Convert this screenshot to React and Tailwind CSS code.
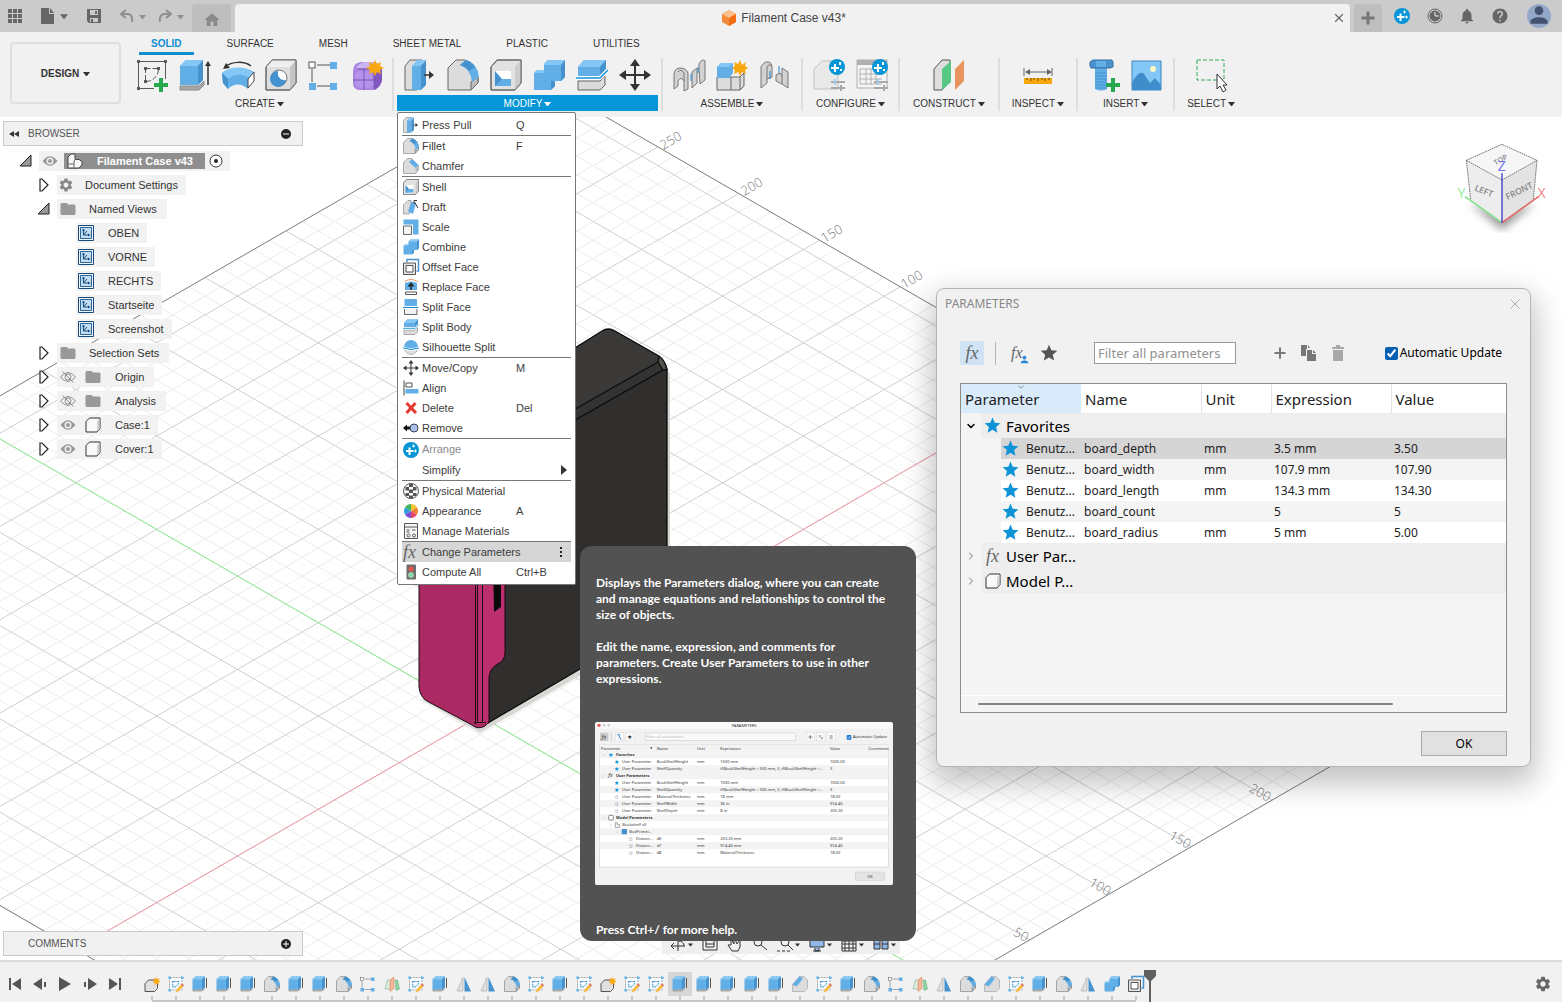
import React, { Component } from "react";
import { MdHelp, MdNotifications, MdStar, MdSettings, MdFolder, MdHome, MdPerson } from "react-icons/md";
import { X, Plus, ChevronDown, ChevronRight } from "lucide-react";

const BLUE = "#62aee6";
const LIGHT = "#84c6f5";
const DARK = "#4592cf";
const LINE = "#666666";

// All tool icons share a 32 x 32 view box
const ICONS = {
  sketch: (
    <>
      <g fill="none" stroke="#5a5a5a">
        <path d="M2.500 2.500H29.500V20M2.500 2.500V29.500H18" />
        <path d="M9.500 9.500H22.500C22.500 17 17 22.500 9.500 22.500Z" strokeDasharray="5 2" />
      </g>
      <path d="M1 1h3v3H1zM28 1h3v3h-3zM1 28h3v3H1zM8 8h3v3H8zM21 8h3v3h-3zM8 21h3v3H8z" fill="#5a5a5a" />
      <path d="M23 19h4v5h5v4h-5v5h-4v-5h-5v-4h5z" fill="#25a850" />
    </>
  ),
  sketchEdit: (
    <>
      <path d="M3 3H28V28H3Z" fill="#f6fbff" stroke="#a9a9a9" strokeWidth="2" strokeDasharray="4 2" />
      <path d="M9 11H22C22 17 17 22 10 23Z" fill="none" stroke="#4592cf" strokeWidth="2" strokeDasharray="6 2" />
      <path d="M1 1h5v5H1zM26 1h5v5h-5zM1 26h5v5H1z" fill="#62aee6" />
      <path d="M17 27L26 17L30 21L21 31L16 32Z" fill="#f5b73d" />
      <path d="M26 17L28 15L32 19L30 21Z" fill="#e8554e" />
    </>
  ),
  extrude: (
    <>
      <path d="M1 27L20 27L25 22V26L20 31H1Z" fill="#a8a8a8" stroke="#8a8a8a" />
      <path d="M1 7L7 1H24V21L19 26H1Z" fill={BLUE} />
      <path d="M1 7L7 1H24L19 7Z" fill={LIGHT} />
      <path d="M19 7L24 1V21L19 26Z" fill={DARK} />
      <path d="M29 26V5" stroke="#333" strokeWidth="1.500" />
      <path d="M26 7L29 2L32 7Z" fill="#333" />
    </>
  ),
  extrudeSmall: (
    <>
      <path d="M1 26H20L26 21V26L20 31H1Z" fill="#a8a8a8" />
      <path d="M1 7L7 1H26V21L20 27H1Z" fill={BLUE} />
      <path d="M1 7L7 1H26L20 7Z" fill={LIGHT} />
      <path d="M20 7L26 1V21L20 27Z" fill={DARK} />
      <path d="M29 24V4" stroke="#555" strokeWidth="2" />
    </>
  ),
  revolve: (
    <>
      <path d="M3 8C10 2 22 2 29 7" fill="none" stroke="#333" strokeWidth="1.500" />
      <path d="M1 10L4 4L8 9Z" fill="#333" />
      <path d="M0 14C9 8 22 8 32 13L26 30C20 24 12 24 6 30L1 24Z" fill={BLUE} />
      <path d="M0 14C9 7 22 7 32 13L27 19C19 14 12 15 6 20Z" fill={LIGHT} />
      <path d="M0 14L6 20V30L1 24Z" fill={DARK} />
      <path d="M26 20L32 13V22L26 29Z" fill="#fff" stroke="#444" />
    </>
  ),
  hole: (
    <>
      <path d="M1 8L7 1H31V24L25 31H1Z" fill="#dedede" stroke={LINE} />
      <path d="M1 8L7 1H31L25 8Z" fill="#efefef" />
      <path d="M25 8L31 1V24L25 31Z" fill="#c4c4c4" />
      <path d="M1 8L7 1H31V24L25 31H1Z" fill="none" stroke={LINE} />
      <circle cx="14" cy="19" r="8" fill="#fff" stroke="#777" />
      <path d="M13 12A8 8 0 1 0 21 21C16 22 12 18 13 12Z" fill={DARK} />
    </>
  ),
  pattern: (
    <>
      <path d="M9 6H24M4 10V23M9 27H24" stroke="#555" />
      <rect x="1" y="3" width="6" height="6" fill="#fff" stroke="#555" />
      <path d="M22 3h7v7h-7zM1 24h7v7H1zM22 24h7v7h-7z" fill={BLUE} />
    </>
  ),
  form: (
    <>
      <path d="M2 12Q2 4 10 3H22Q30 5 31 12V21Q30 28 24 31H8Q2 30 2 24Z" fill="#a982e2" />
      <path d="M5 8Q10 3 15 3H24L21 9H7Z" fill="#cdb2f4" />
      <path d="M22 12L31 9V21Q30 27 23 31Z" fill="#8358c2" />
      <rect x="4" y="12" width="18" height="17" rx="5" fill="#b592ea" />
      <path d="M2 21H23L31 17M13 10V31M7 10H22M24 11V30" stroke="#7b55b8" fill="none" />
      <path d="M24 1L26 5L30 3L29 7L33 9L29 11L30 15L26 13L24 17L22 13L18 15L19 11L15 9L19 7L18 3L22 5Z" fill="#f7a80f" />
    </>
  ),
  pressPull: (
    <>
      <path d="M1 7L6 1H18V26L13 31H1Z" fill="#dcdcdc" stroke={LINE} />
      <path d="M8 7L13 1H22L17 7Z" fill={LIGHT} />
      <path d="M8 7H17V31H8Z" fill={BLUE} />
      <path d="M17 7L22 1V26L17 31Z" fill={DARK} />
      <path d="M20 16H26" stroke="#333" strokeWidth="1.500" />
      <path d="M25 12L30 16L25 20Z" fill="#333" />
    </>
  ),
  fillet: (
    <>
      <path d="M1 9L9 1H18Q30 4 31 20V23L24 31H1Z" fill="#dcdcdc" stroke={LINE} />
      <path d="M24 23L31 18V24L24 31Z" fill="#bdbdbd" stroke={LINE} />
      <path d="M13 6L19 1Q31 5 32 18L25 23Q24 10 13 6Z" fill={BLUE} />
      <path d="M13 6L19 1Q25 3 28 8L22 12Q19 8 13 6Z" fill={DARK} />
    </>
  ),
  chamfer: (
    <>
      <path d="M1 9L9 1H17L31 15V24L25 31H1Z" fill="#dcdcdc" stroke={LINE} />
      <path d="M12 8L18 2L31 14L25 20Z" fill={BLUE} />
      <path d="M25 20L31 14V24L25 31Z" fill="#bdbdbd" />
    </>
  ),
  chamferLeft: (
    <>
      <path d="M1 17L15 1H24L31 8V24L25 31H1Z" fill="#dcdcdc" stroke="#8a8a8a" />
      <path d="M1 17L15 1L22 5L9 21Z" fill={BLUE} />
    </>
  ),
  shell: (
    <>
      <path d="M1 8L7 1H31V24L25 31H1Z" fill="#e2e2e2" stroke={LINE} />
      <path d="M25 8L31 1V24L25 31Z" fill="#cdcdcd" />
      <path d="M1 8L7 1H31V24L25 31H1Z" fill="none" stroke={LINE} />
      <rect x="5" y="12" width="16" height="15" fill="#fff" />
      <path d="M5 12L12 20V27H5Z" fill={DARK} />
      <path d="M5 27L12 20H21V27Z" fill={BLUE} />
    </>
  ),
  combine: (
    <>
      <path d="M1 14L4 11H11V5L15 1H32V18L28 22H22V27L18 31H1Z" fill={BLUE} />
      <path d="M11 5L15 1H32L28 6H11ZM1 14L4 11H11V14Z" fill={LIGHT} />
      <path d="M28 6L32 1V18L28 22ZM18 22H22V27L18 31Z" fill={DARK} />
    </>
  ),
  split: (
    <>
      <path d="M2 8L8 1H30V11L24 17H2Z" fill={BLUE} />
      <path d="M2 8L8 1H30L24 8Z" fill={LIGHT} />
      <path d="M24 8L30 1V11L24 17Z" fill={DARK} />
      <path d="M2 22H24L29 17V26L24 31H2Z" fill="#dadada" stroke={LINE} />
      <path d="M0 19H24L32 11" fill="none" stroke="#fff" strokeWidth="4" />
      <path d="M0 19H24L32 11" fill="none" stroke="#1493d8" strokeWidth="1.500" />
    </>
  ),
  move: (
    <>
      <path d="M16 5V27M5 16H27" stroke="#333" strokeWidth="2" />
      <path d="M16 0L21 7H11ZM16 32L21 25H11ZM0 16L7 11V21ZM32 16L25 11V21Z" fill="#333" />
    </>
  ),
  newComponent: (
    <>
      <path d="M1 18H24L28 14V27L24 31H1Z" fill="#dcdcdc" stroke={LINE} />
      <path d="M15 18V31M24 18V31" stroke={LINE} />
      <path d="M1 8L5 4H17V14L13 19H1Z" fill={BLUE} />
      <path d="M1 8L5 4H17L13 8Z" fill={LIGHT} />
      <path d="M24 1L26 6L30 3L29 7L32 9L29 11L30 15L26 13L24 17L22 13L18 15L19 11L16 9L19 7L18 3L22 5Z" fill="#f7a80f" />
    </>
  ),
  component: (
    <>
      <path d="M2 15L9 8H27V25L21 31H2Z" fill="#e0e0e0" stroke="#555" strokeWidth="2" />
      <path d="M24 1L26 6L31 4L29 9L33 11L29 13L30 18L25 15L21 18L21 13L17 11L21 8L19 4L23 6Z" fill="#f7a80f" />
    </>
  ),
  joint: (
    <g fill="#d2d2d2" stroke="#777">
      <path d="M26 10V5Q29 -1 32 2V21L27 25Z" />
      <path d="M19 13L24 9V24L19 29Z" />
      <path d="M1 30V15Q2 9 7 9Q13 9 15 14V30L11 32V22Q8 17 5 22V27Z" />
      <path d="M5 13Q8 9 11 14V22" fill="none" />
      <path d="M18 15V22M25 8V14" stroke="#1686d6" />
    </g>
  ),
  asBuilt: (
    <g fill="#d2d2d2" stroke="#777">
      <path d="M2 29V8Q5 2 10 3Q13 4 13 8V18L8 20V24Z" />
      <path d="M8 20V8Q9 5 13 6" fill="none" />
      <path d="M17 16L21 14L23 17V9L29 13V29L23 25L17 22Z" />
      <path d="M23 17V25" fill="none" />
      <path d="M11 12V20M20 7V14" stroke="#1686d6" />
    </g>
  ),
  configure: (
    <>
      <path d="M1 10L9 2H25V30H1Z" fill="#e9e9e9" stroke="#c2c2c2" />
      <circle cx="24" cy="8" r="8" fill="#0696d7" />
      <path d="M22 5V13M18 9H26M27 3V6M28 10V12" stroke="#fff" strokeWidth="2" />
      <path d="M18 23H32M18 29H32M22 20V26M28 26V32" stroke="#a9a9a9" strokeWidth="2" />
      <path d="M22 20V26" stroke="#9fd0ee" strokeWidth="2" />
    </>
  ),
  configTable: (
    <>
      <path d="M1 1H31V29H1Z" fill="#f5f5f5" stroke="#b0b0b0" />
      <path d="M1 1H31V6H1Z" fill="#b0b0b0" />
      <path d="M4 10H26M4 15H26M4 20H26M4 25H26M4 10V25M10 10V25M15 10V25M20 10V25" stroke="#b0b0b0" />
      <circle cx="24" cy="8" r="8" fill="#0696d7" />
      <path d="M22 5V13M18 9H26M27 3V6M28 10V12" stroke="#fff" strokeWidth="2" />
      <path d="M18 23H32M18 29H32M28 26V32" stroke="#a9a9a9" strokeWidth="2" />
      <path d="M22 20V26" stroke="#9fd0ee" strokeWidth="2" />
    </>
  ),
  construct: (
    <>
      <path d="M1 10L9 1H17V22L9 31H1Z" fill="#dedede" stroke="#555" />
      <path d="M9 10L18 2V23L9 31Z" fill="#58c784" />
      <path d="M22 10L31 1V22L22 31Z" fill="#e9945f" />
    </>
  ),
  inspect: (
    <>
      <path d="M2 9V17M30 9V17M5 13H28" stroke="#666" fill="none" />
      <path d="M3 13L8 10V16ZM30 13L25 10V16Z" fill="#666" />
      <path d="M2 19H30V25H2Z" fill="#f7a80f" />
      <path d="M5 19V21M9 19V22M12 19V21M16 19V22M20 19V21M23 19V22M27 19V21" stroke="#6b5010" />
    </>
  ),
  insertBolt: (
    <>
      <path d="M7 9H19V30Q13 33 7 30Z" fill={BLUE} />
      <path d="M7 14H19M7 17H19M7 20H19M7 23H19M7 26H19M7 29H19" stroke={DARK} />
      <path d="M2 3L5 1H24L25 3V8L22 9H3L2 7Z" fill="#4a93cf" stroke="#35719f" />
      <path d="M8 2H18V8H8Z" fill={BLUE} />
      <path d="M23 19h4v5h5v4h-5v5h-4v-5h-5v-4h5z" fill="#25a850" />
    </>
  ),
  insertImage: (
    <>
      <path d="M1 2H30V31H1Z" fill={LIGHT} stroke="#3d87c0" />
      <path d="M1 24Q8 10 13 15L19 24L24 19L30 26V31H1Z" fill="#3f8dca" />
      <circle cx="22" cy="10" r="3" fill="#fdf7c8" />
    </>
  ),
  select: (
    <>
      <path d="M2 1H29V21H2Z" fill="none" stroke="#2fab59" strokeDasharray="4 2" />
      <path d="M22 15V30L25 27L28 33L31 31L28 26H32Z" fill="#fff" stroke="#333" />
    </>
  ),
  draft: (
    <>
      <path d="M1 12L10 3H16L14 28L12 30H1Z" fill="#dcdcdc" stroke={LINE} />
      <path d="M10 25L17 5L26 9L20 30Z" fill={BLUE} />
      <path d="M23 6L30 18M22 9V3H28" stroke="#333" strokeWidth="2" fill="none" />
    </>
  ),
  scale: (
    <>
      <path d="M1 1H31V31H20V11H1Z" fill={BLUE} />
      <path d="M1 14H17V31H1Z" fill="#f5f5f5" stroke={LINE} strokeWidth="2" />
    </>
  ),
  offset: (
    <>
      <path d="M8 6V1H31V24H27" fill="none" stroke={DARK} strokeWidth="3" />
      <path d="M1 8H25V31H1Z" fill="#e6e6e6" stroke="#555" strokeWidth="2" />
      <path d="M6 13H20V26H6Z" fill="#fff" stroke="#555" strokeWidth="2" />
    </>
  ),
  replaceFace: (
    <>
      <path d="M3 5Q16 -3 29 5" fill="none" stroke="#e9945f" strokeWidth="2" />
      <path d="M4 8Q16 2 28 8V22H4Z" fill={BLUE} />
      <path d="M16 22V12M11 15L16 9L21 15" fill="none" stroke="#222" strokeWidth="3" />
      <path d="M5 26H27V31H5Z" fill="#fff" stroke="#555" strokeWidth="2" />
    </>
  ),
  splitFace: (
    <>
      <path d="M3 0H28V14H3Z" fill={BLUE} />
      <path d="M3 20V31H28V20" fill="#f2f2f2" stroke="#666" strokeWidth="2" />
      <path d="M0 17H31" stroke="#1686d6" strokeWidth="2" />
    </>
  ),
  silhouette: (
    <>
      <circle cx="16" cy="16" r="14" fill={BLUE} />
      <path d="M3 21H29Q25 31 16 31Q7 31 3 21Z" fill="#dedede" stroke="#888" />
      <path d="M0 18Q16 24 32 18" stroke="#fff" strokeWidth="5" fill="none" />
      <path d="M0 18Q16 24 32 18" stroke="#1686d6" strokeWidth="2" fill="none" />
    </>
  ),
  align: (
    <>
      <path d="M2 1V31" stroke="#444" strokeWidth="2" />
      <path d="M6 6H18V14H6Z" fill="#fff" stroke="#555" strokeWidth="2" />
      <path d="M5 18H31V27H5Z" fill={BLUE} />
    </>
  ),
  remove: (
    <>
      <path d="M0 16L8 9V13H14V19H8V23Z" fill="#111" />
      <circle cx="22" cy="16" r="8" fill="#a9c3ec" stroke="#445" strokeWidth="2" />
    </>
  ),
  delete: <path d="M7 6L26 26M25 6L7 26" stroke="#e8392f" strokeWidth="6" />,
  arrange: (
    <>
      <circle cx="16" cy="16" r="16" fill="#0696d7" />
      <path d="M13 11V26M6 18H21" stroke="#fff" strokeWidth="4" />
      <path d="M21 5V11M18 8H24M25 15V21M22 18H28" stroke="#fff" strokeWidth="2" />
    </>
  ),
  physical: (
    <>
      <circle cx="16" cy="16" r="15" fill="#fff" stroke="#555" strokeWidth="2" />
      <path d="M12 2h8v6h-8zM5 8h7v7H5zM20 8h7v7h-7zM12 13h8v7h-8zM5 20h7v6H5zM20 20h7v6h-7zM12 25h8v6h-8z" fill="#555" />
    </>
  ),
  appearance: (
    <>
      <path d="M16 16V2A14 14 0 0 1 28 9Z" fill="#f6c22e" />
      <path d="M16 16L28 9A14 14 0 0 1 28 23Z" fill="#ef8232" />
      <path d="M16 16L28 23A14 14 0 0 1 16 30Z" fill="#e64a6b" />
      <path d="M16 16V30A14 14 0 0 1 4 23Z" fill="#7a4fd6" />
      <path d="M16 16L4 23A14 14 0 0 1 4 9Z" fill="#2f9de0" />
      <path d="M16 16L4 9A14 14 0 0 1 16 2Z" fill="#3fb45e" />
    </>
  ),
  materials: (
    <>
      <path d="M3 1H29V31H3Z" fill="#f7f7f7" stroke="#555" strokeWidth="2" />
      <path d="M3 8H29M7 14H13M18 14H25M7 18H13" stroke="#555" strokeWidth="2" />
      <circle cx="11" cy="25" r="3" fill="none" stroke="#555" strokeWidth="2" />
      <circle cx="22" cy="25" r="3" fill="none" stroke="#555" strokeWidth="2" />
    </>
  ),
  compute: (
    <>
      <rect x="7" y="1" width="19" height="30" rx="2" fill="#6e6e6e" />
      <circle cx="16" cy="10" r="5" fill="#e8554e" />
      <circle cx="16" cy="22" r="5" fill="#7bd69b" stroke="#e7ffe9" />
    </>
  ),
  mirror: (
    <>
      <path d="M14 3V30H2Z" fill="#dedede" stroke="#999" />
      <path d="M17 2V31H30Z" fill={DARK} />
    </>
  ),
  plane: (
    <>
      <path d="M2 26L7 8H13V26Z" fill="#d9ecdd" stroke="#7c9c84" />
      <path d="M12 8L20 2V25L12 31Z" fill="#f1b69a" stroke="#d77c50" />
      <path d="M22 8H27L31 26L24 29Z" fill="#8fd3a4" stroke="#5aa873" />
    </>
  ),
  box: (
    <>
      <path d="M2 9L9 2H30V23L24 30H2Z" fill="#fafafa" stroke="#333" strokeWidth="2" strokeLinejoin="round" />
      <path d="M24 9L29 3V22L24 29Z" fill="#d2d2d2" />
    </>
  ),
  assembly: (
    <>
      <path d="M2 8L8 2H16V13H24L30 17V24L24 30H2Z" fill="#f7f7f7" stroke="#444" strokeWidth="2" strokeLinejoin="round" />
      <path d="M14 30V16L17 13M3 22H14" stroke="#666" fill="none" strokeWidth="2" />
    </>
  ),
  namedView: (
    <>
      <path d="M1 1H31V31H1Z" fill="#eef6fc" stroke="#164a7b" strokeWidth="2" />
      <path d="M5 5H27V27H5Z" fill="#c3def2" stroke="#2b6699" strokeWidth="2" />
      <path d="M11 10V20H22M11 20L18 12" fill="none" stroke="#164a7b" strokeWidth="2" />
      <path d="M8 12L11 7L14 12ZM20 17L25 20L20 23Z" fill="#164a7b" />
    </>
  ),
  eye: (
    <>
      <path d="M1 16Q16 -3 31 16Q16 35 1 16Z" fill="#9a9a9a" />
      <circle cx="16" cy="16" r="7" fill="#eee" />
      <circle cx="16" cy="16" r="4" fill="#9a9a9a" />
    </>
  ),
  eyeOff: (
    <g fill="none" stroke="#8f8f8f" strokeWidth="2">
      <path d="M1 16Q16 -2 31 16Q16 34 1 16Z" />
      <circle cx="16" cy="16" r="6" />
      <path d="M5 5L27 27" />
    </g>
  ),
};

const Icon = ({ name, className = "size-4" }) => (
  <svg viewBox="0 0 32 32" className={`shrink-0 overflow-visible ${className}`} aria-hidden="true">
    {ICONS[name]}
  </svg>
);

const Caret = ({ className = "size-[7px]" }) => (
  <svg viewBox="0 0 7 7" className={`shrink-0 ${className}`} fill="currentColor" aria-hidden="true">
    <path d="M0 2H7L4 6H3Z" />
  </svg>
);

const Fx = ({ className = "text-lg" }) => (
  <span className={`font-['Liberation_Serif',serif] italic leading-none text-[#666] ${className}`}>fx</span>
);

const TABS = ["SOLID", "SURFACE", "MESH", "SHEET METAL", "PLASTIC", "UTILITIES"];

const GROUPS = [
  { label: "CREATE", pad: "px-[9px]", icons: ["sketch", "extrude", "revolve", "hole", "pattern", "form"] },
  { label: "MODIFY", pad: "px-[3px]", active: true, icons: ["pressPull", "fillet", "shell", "combine", "split", "move"] },
  { label: "ASSEMBLE", pad: "px-[10px]", icons: ["joint", "newComponent", "asBuilt"] },
  { label: "CONFIGURE", pad: "px-[10px]", icons: ["configure", "configTable"] },
  { label: "CONSTRUCT", pad: "px-[13px]", icons: ["construct"] },
  { label: "INSPECT", pad: "px-[12px]", icons: ["inspect"] },
  { label: "INSERT", pad: "px-[10px]", icons: ["insertBolt", "insertImage"] },
  { label: "SELECT", pad: "px-[12px]", icons: ["select"] },
];

const MENU = [
  [{ label: "Press Pull", icon: "pressPull", keys: "Q" }],
  [
    { label: "Fillet", icon: "fillet", keys: "F" },
    { label: "Chamfer", icon: "chamfer" },
  ],
  [
    { label: "Shell", icon: "shell" },
    { label: "Draft", icon: "draft" },
    { label: "Scale", icon: "scale" },
    { label: "Combine", icon: "combine" },
    { label: "Offset Face", icon: "offset" },
    { label: "Replace Face", icon: "replaceFace" },
    { label: "Split Face", icon: "splitFace" },
    { label: "Split Body", icon: "split" },
    { label: "Silhouette Split", icon: "silhouette" },
  ],
  [
    { label: "Move/Copy", icon: "move", keys: "M" },
    { label: "Align", icon: "align" },
    { label: "Delete", icon: "delete", keys: "Del" },
    { label: "Remove", icon: "remove" },
  ],
  [
    { label: "Arrange", icon: "arrange", disabled: true },
    { label: "Simplify", submenu: true },
  ],
  [
    { label: "Physical Material", icon: "physical" },
    { label: "Appearance", icon: "appearance", keys: "A" },
    { label: "Manage Materials", icon: "materials" },
  ],
  [
    { label: "Change Parameters", fx: true, active: true },
    { label: "Compute All", icon: "compute", keys: "Ctrl+B" },
  ],
];

const VIEWS = ["OBEN", "VORNE", "RECHTS", "Startseite", "Screenshot"];

const PARAMETERS = [
  { name: "board_depth", unit: "mm", expression: "3.5 mm", value: "3.50" },
  { name: "board_width", unit: "mm", expression: "107.9 mm", value: "107.90" },
  { name: "board_length", unit: "mm", expression: "134.3 mm", value: "134.30" },
  { name: "board_count", unit: "", expression: "5", value: "5" },
  { name: "board_radius", unit: "mm", expression: "5 mm", value: "5.00" },
];

const TIMELINE = [
  "component", "sketchEdit", "extrudeSmall", "extrudeSmall", "extrudeSmall", "fillet", "extrudeSmall",
  "extrudeSmall", "fillet", "pattern", "plane", "sketchEdit", "extrudeSmall", "mirror", "mirror", "fillet",
  "sketchEdit", "extrudeSmall", "sketchEdit", "component", "sketchEdit", "sketchEdit", "extrudeSmall",
  "extrudeSmall", "extrudeSmall", "extrudeSmall", "extrudeSmall", "chamferLeft", "sketchEdit",
  "extrudeSmall", "fillet", "pattern", "plane", "mirror", "fillet", "chamferLeft", "sketchEdit",
  "extrudeSmall", "fillet", "mirror", "combine", "offset",
];

// ---- Title bar ----

const TitleBar = () => (
  <div className="flex h-8 bg-[#cbcbcb] pt-1 text-[#666]">
    <div className="flex items-center gap-[19px] pb-1 pl-2">
      <button aria-label="Data panel">
        <svg viewBox="0 0 14 14" className="size-[14px]" fill="currentColor">
          <path d="M0 0h4v4H0zM5 0h4v4H5zM10 0h4v4h-4zM0 5h4v4H0zM5 5h4v4H5zM10 5h4v4h-4zM0 10h4v4H0zM5 10h4v4H5zM10 10h4v4h-4z" />
        </svg>
      </button>
      <button aria-label="File" className="flex items-center gap-[5px]">
        <svg viewBox="0 0 14 16" className="h-4 w-[14px]" fill="currentColor">
          <path d="M0 0H8V6H13V16H0ZM9 0L13 5H9Z" />
        </svg>
        <Caret className="size-2" />
      </button>
      <button aria-label="Save">
        <svg viewBox="0 0 14 14" className="size-[14px]" fill="currentColor">
          <path fillRule="evenodd" d="M0 0H14V14H2L0 12ZM3 1V6H11V1ZM3 9V13H11V9ZM4 10H6V13H4ZM8 2H10V5H8Z" />
        </svg>
      </button>
      <div className="flex gap-3 text-[#8f8f8f]">
        <button aria-label="Undo" className="flex items-center gap-[5px]">
          <svg viewBox="0 0 14 14" className="size-[14px]" fill="none" stroke="currentColor" strokeWidth="2">
            <path d="M6 1L1 5L6 9M1 5H8Q13 6 12 13" />
          </svg>
          <Caret />
        </button>
        <button aria-label="Redo" className="flex items-center gap-[5px]">
          <svg viewBox="0 0 14 14" className="size-[14px]" fill="none" stroke="currentColor" strokeWidth="2">
            <path d="M8 1L13 5L8 9M13 5H6Q1 6 2 13" />
          </svg>
          <Caret />
        </button>
      </div>
    </div>
    <button aria-label="Home" className="ml-2 mr-1 flex w-[39px] items-center justify-center rounded-t bg-[#bebebe] pt-1 text-[#8a8a8a]">
      <MdHome className="size-[18px]" />
    </button>
    <div className="flex flex-1 items-center rounded-t bg-[#f1f1f1] text-xs text-[#444]">
      <div className="flex flex-1 items-center justify-center gap-1">
        <svg viewBox="0 0 16 16" className="size-4">
          <path d="M8 0L15 4V12L8 16L1 12V4Z" fill="#f58a3c" />
          <path d="M8 0L15 4L8 8L1 4Z" fill="#fcc08f" />
          <path d="M8 8L15 4V12L8 16Z" fill="#f36b16" />
        </svg>
        Filament Case v43*
      </div>
      <button aria-label="Close tab" className="mr-1 text-[#666]">
        <X className="size-[14px]" />
      </button>
    </div>
    <button aria-label="New tab" className="ml-1 flex w-7 items-center justify-center rounded-t bg-[#bebebe] text-[#777]">
      <Plus className="size-[18px]" strokeWidth={4} />
    </button>
    <div className="flex items-center gap-[15px] pb-1 pl-3 pr-[11px]">
      <button aria-label="Extensions">
        <Icon name="arrange" className="size-4" />
      </button>
      <button aria-label="Job status" className="pl-0.5">
        <svg viewBox="0 0 16 16" className="size-4" fill="none" stroke="currentColor">
          <circle cx="8" cy="8" r="7" />
          <circle cx="8" cy="8" r="5" fill="currentColor" />
          <path d="M8 4V8H12" stroke="#eee" />
        </svg>
      </button>
      <button aria-label="Notifications">
        <MdNotifications className="size-[18px]" />
      </button>
      <button aria-label="Help">
        <MdHelp className="size-[18px]" />
      </button>
      <button aria-label="Account" className="ml-[3px] flex size-6 items-end justify-center overflow-hidden rounded-full bg-[#93a8c9] text-[#43536f]">
        <MdPerson className="size-[26px] shrink-0" />
      </button>
    </div>
  </div>
);

// ---- Modify menu and its hover help ----

const MenuItem = ({ item }) => (
  <button
    role="menuitem"
    disabled={item.disabled}
    className={`flex w-full items-center pl-px text-left ${item.disabled ? "h-[21px] text-[#888]" : "h-5"} ${
      item.active ? "bg-[#d6d6d6]" : ""
    }`}
  >
    <span className="flex w-[19px] justify-start">
      {item.icon && <Icon name={item.icon} />}
      {item.fx && <Fx className="text-lg" />}
    </span>
    <span className="w-[94px] whitespace-nowrap">{item.label}</span>
    <span className="flex-1">{item.keys}</span>
    {item.submenu && (
      <svg viewBox="0 0 6 10" className="mr-1 h-[10px] w-[6px]" fill="#333">
        <path d="M0 0L6 5L0 10Z" />
      </svg>
    )}
    {item.active && (
      <svg viewBox="0 0 2 12" className="mr-[9px] h-3 w-0.5" fill="#222">
        <path d="M0 1h2v2H0zM0 5h2v2H0zM0 9h2v2H0z" />
      </svg>
    )}
  </button>
);

const PREVIEW_ROWS = [
  { y: 187, x: 126, star: 110, type: "User Parameter", name: "BookShelfHeight", unit: "mm", exp: "1000 mm", val: "1000.00", on: true },
  { y: 208, x: 126, star: 110, type: "User Parameter", name: "ShelfQuantity", unit: "", exp: "if(BookShelfHeight < 500 mm; 2; if(BookShelfHeight <...", val: "3", on: true },
  { y: 249, x: 126, star: 110, type: "User Parameter", name: "BookShelfHeight", unit: "mm", exp: "1000 mm", val: "1000.00", on: true },
  { y: 270, x: 126, star: 110, type: "User Parameter", name: "ShelfQuantity", unit: "", exp: "if(BookShelfHeight < 500 mm; 2; if(BookShelfHeight <...", val: "3", on: true },
  { y: 292, x: 126, star: 110, type: "User Parameter", name: "MaterialThickness", unit: "mm", exp: "18 mm", val: "18.00" },
  { y: 313, x: 126, star: 110, type: "User Parameter", name: "ShelfWidth", unit: "mm", exp: "36 in", val: "914.40" },
  { y: 334, x: 126, star: 110, type: "User Parameter", name: "ShelfDepth", unit: "mm", exp: "8 in", val: "203.20" },
  { y: 417, x: 168, star: 151, type: "Distanc...", name: "d6", unit: "mm", exp: "203.20 mm", val: "203.20" },
  { y: 438, x: 168, star: 151, type: "Distanc...", name: "d7", unit: "mm", exp: "914.40 mm", val: "914.40" },
  { y: 460, x: 168, star: 151, type: "Distanc...", name: "d8", unit: "mm", exp: "MaterialThickness", val: "18.00" },
];

const DialogPreview = () => (
  <svg viewBox="45 67 894 490" className="mt-[35px] w-[298px] font-['Noto_Sans',sans-serif] font-normal" fontSize="12" fill="#333">
    <rect x="45" y="67" width="894" height="490" rx="8" fill="#f2f2f2" />
    <rect x="45" y="67" width="894" height="20" rx="8" fill="#fafafa" />
    <circle cx="57" cy="77" r="5" fill="#ee5b52" />
    <circle cx="72" cy="77" r="4" fill="#ccc" />
    <circle cx="86" cy="77" r="4" fill="#ccc" />
    <text x="492" y="81" textAnchor="middle">PARAMETERS</text>
    <rect x="60" y="99" width="25" height="25" fill="#c9c9c9" />
    <path d="M94 98V126" stroke="#bbb" strokeWidth="2" />
    <g fill="#fafafa" stroke="#ccc">
      <rect x="106" y="99" width="25" height="25" />
      <rect x="137" y="99" width="25" height="25" />
      <rect x="679" y="99" width="25" height="25" />
      <rect x="710" y="99" width="25" height="25" />
      <rect x="741" y="99" width="25" height="25" />
      <rect x="195" y="100" width="452" height="22" stroke="#aaa" />
    </g>
    <text x="72" y="117" textAnchor="middle" fontStyle="italic" fontSize="16">fx</text>
    <path d="M112 105H118V112M118 112L124 120" stroke="#2b86d6" strokeWidth="3" fill="none" />
    <text x="149" y="118" textAnchor="middle" fontSize="18">★</text>
    <path d="M691 106V118M685 112H697" stroke="#555" strokeWidth="2" />
    <path d="M716 106H723V113H716ZM722 112H729V119H722ZM749 106H758V119H749Z" fill="#bbb" />
    <text x="198" y="116" fill="#bbb">Filter all parameters</text>
    <rect x="800" y="106" width="14" height="14" rx="3" fill="#1678cf" />
    <path d="M803 113L806 116L811 109" stroke="#fff" strokeWidth="2" fill="none" />
    <text x="819" y="116">Automatic Update</text>
    <rect x="58" y="136" width="868" height="366" fill="#fff" stroke="#aaa" />
    <path d="M59 137H925V155H59ZM59 155H925V176H59ZM59 197H925V239H59ZM59 260H925V281H59ZM59 302H925V323H59ZM59 344H925V365H59ZM59 386H925V407H59ZM59 428H925V449H59Z" fill="#f3f3f3" />
    <text x="63" y="150">Parameter</text>
    <text x="230" y="150">Name</text>
    <text x="351" y="150">Unit</text>
    <text x="421" y="150">Expression</text>
    <text x="750" y="150">Value</text>
    <text x="865" y="150">Comments</text>
    <path d="M210 143H217L214 149Z" />
    <path d="M67 164L70 168L74 164M67 227L70 231L74 227M67 353L70 357L74 353M89 374L92 378L96 374M108 395L111 399L115 395" fill="none" stroke="#999" />
    <text x="84" y="172" fontSize="18" fill="#0696d7">★</text>
    <text x="108" y="170" fontWeight="bold">Favorites</text>
    <text x="85" y="233" fontStyle="italic" fontSize="16">fx</text>
    <text x="108" y="232" fontWeight="bold">User Parameters</text>
    <rect x="86" y="347" width="14" height="14" rx="3" fill="#fff" stroke="#555" strokeWidth="2" />
    <text x="108" y="358" fontWeight="bold">Model Parameters</text>
    <path d="M106 369H112V375H119V383H106Z" fill="#fff" stroke="#777" strokeWidth="2" />
    <text x="127" y="380">Bookshelf v0</text>
    <rect x="125" y="388" width="16" height="16" rx="2" fill="#4592cf" />
    <text x="148" y="401">BoxPrimiti...</text>
    {PREVIEW_ROWS.map((row) => (
      <g key={row.y}>
        <text x={row.star} y={row.y + 6} textAnchor="middle" fontSize="17" fill={row.on ? "#0696d7" : "#666"}>
          {row.on ? "★" : "☆"}
        </text>
        <text x={row.x} y={row.y + 4}>{row.type}</text>
        <text x="230" y={row.y + 4}>{row.name}</text>
        <text x="351" y={row.y + 4}>{row.unit}</text>
        <text x="421" y={row.y + 4}>{row.exp}</text>
        <text x="750" y={row.y + 4}>{row.val}</text>
      </g>
    ))}
    <rect x="826" y="517" width="88" height="25" fill="#e4e4e4" stroke="#bbb" />
    <text x="870" y="534" textAnchor="middle">OK</text>
  </svg>
);

const ModifyMenu = () => (
  <div className="absolute left-0 top-full z-30 mt-px">
    <div role="menu" className="w-[179px] rounded-xs border border-[#777] bg-white px-1 py-0.5 text-[11px] text-[#3c3c3c]">
      {MENU.map((section, i) => (
        <div key={section[0].label} className={i > 0 ? "border-t border-[#777]" : ""}>
          {section.map((item) => (
            <MenuItem key={item.label} item={item} />
          ))}
        </div>
      ))}
    </div>
    <div
      role="tooltip"
      className="absolute left-[183px] top-[434px] w-[336px] rounded-xl bg-[#525252] px-[15px] pb-[3px] pt-[29px] font-['Lato',sans-serif] text-xs font-bold leading-4 text-white"
    >
      <p className="px-px">
        Displays the Parameters dialog, where you can create and manage equations and relationships to control the size
        of objects.
      </p>
      <p className="mt-4 px-px">
        Edit the name, expression, and comments for parameters. Create User Parameters to use in other expressions.
      </p>
      <DialogPreview />
      <p className="mt-[37px] px-px">Press Ctrl+/ for more help.</p>
    </div>
  </div>
);

const Ribbon = ({ activeTab, onTab }) => (
  <div className="flex bg-[#f1f1f1] pb-[6px] pl-[10px] text-[10px] text-[#333]">
    <button className="mr-[6px] mt-[10px] flex h-[62px] w-[111px] items-center justify-center gap-1 rounded border-2 border-[#dfdfdf] font-bold">
      DESIGN <Caret />
    </button>
    <div>
      <nav className="flex h-[26px] gap-[45px] pl-[24px]">
        {TABS.map((tab) => (
          <button
            key={tab}
            onClick={() => onTab(tab)}
            className={`relative h-[23px] whitespace-nowrap ${
              activeTab === tab
                ? "font-bold text-[#0f8fd0] after:absolute after:-inset-x-3 after:bottom-0 after:h-[3px] after:bg-[#0f8fd0]"
                : ""
            }`}
          >
            {tab}
          </button>
        ))}
      </nav>
      <div className="flex">
        {GROUPS.map((group) => (
          <div
            key={group.label}
            className={`flex h-[53px] border-[#dedede] pt-px ${group.pad} ${group.label === "SELECT" ? "" : "border-r-2"}`}
          >
            <div className="relative flex flex-col">
              <div className={`flex justify-center gap-[11px] ${group.active ? "px-[7px]" : ""}`}>
                {group.icons.map((name) => (
                  <button key={name} aria-label={name}>
                    <Icon name={name} className="size-8" />
                  </button>
                ))}
              </div>
              <button
                className={`mt-1 flex h-4 items-center justify-center gap-0.5 whitespace-nowrap ${
                  group.active ? "bg-[#0696d7] text-white" : ""
                }`}
              >
                {group.label} <Caret />
              </button>
              {group.active && <ModifyMenu />}
            </div>
          </div>
        ))}
      </div>
    </div>
  </div>
);

// ---- Canvas ----

// Isometric grid around the origin at (480, 716), 5 minor cells per major
const SLOPE = 0.577;
const MINOR = 18.66;
const OX = 480;
const OY = 716;

const isoPoint = (u, v) => {
  const c = OY + SLOPE * OX + u * MINOR;
  const d = OY - SLOPE * OX + v * MINOR;
  return [(c - d) / (2 * SLOPE), (c + d) / 2];
};

const isoLine = (u1, v1, u2, v2) => {
  const [x1, y1] = isoPoint(u1, v1);
  const [x2, y2] = isoPoint(u2, v2);
  return `M${x1.toFixed(1)} ${y1.toFixed(1)}L${x2.toFixed(1)} ${y2.toFixed(1)}`;
};

const U_MIN = -32;
const U_MAX = 29;
const V_MIN = -36;
const V_MAX = 25;

const gridPath = (major) => {
  const parts = [];
  for (let u = U_MIN; u <= U_MAX; u++) {
    if ((u % 5 === 0) === major) parts.push(isoLine(u, V_MIN, u, V_MAX));
  }
  for (let v = V_MIN; v <= V_MAX; v++) {
    if ((v % 5 === 0) === major) parts.push(isoLine(U_MIN, v, U_MAX, v));
  }
  return parts.join("");
};

const AXIS_LABELS = [
  { text: "250", x: 671, y: 145, angle: -30 },
  { text: "200", x: 752, y: 191, angle: -30 },
  { text: "150", x: 832, y: 238, angle: -30 },
  { text: "100", x: 912, y: 284, angle: -30 },
  { text: "200", x: 1260, y: 797, angle: 30 },
  { text: "150", x: 1180, y: 844, angle: 30 },
  { text: "100", x: 1100, y: 891, angle: 30 },
  { text: "50", x: 1021, y: 939, angle: 30 },
];

const Canvas = () => (
  <svg
    viewBox="0 117 1562 843"
    preserveAspectRatio="xMidYMid slice"
    className="absolute inset-0 size-full"
    fill="none"
    aria-hidden="true"
  >
    <path d={gridPath(false)} stroke="#ececec" />
    <path d={gridPath(true)} stroke="#cfcfcf" />
    <path
      d={isoLine(U_MIN, V_MIN, U_MAX, V_MIN) + isoLine(U_MAX, V_MIN, U_MAX, V_MAX) + isoLine(U_MIN, V_MAX, U_MAX, V_MAX) + isoLine(U_MIN, V_MIN, U_MIN, V_MAX)}
      stroke="#808080"
    />
    <path d={isoLine(0, V_MIN, 0, V_MAX)} stroke="#f59aa4" />
    <path d={isoLine(U_MIN, 0, U_MAX, 0)} stroke="#8df08d" />
    <g fill="#777" fontSize="13" textAnchor="middle" fontFamily="'Open Sans', sans-serif" fontWeight="300">
      {AXIS_LABELS.map((l) => (
        <text key={l.x} x={l.x} y={l.y} transform={`rotate(${l.angle} ${l.x} ${l.y - 4})`}>
          {l.text}
        </text>
      ))}
    </g>

    {/* Case */}
    <path d="M422 700L480 733L670 624V374L664 362L609 331Z" fill="#d9d7d4" />
    <path d="M570 351L602 331Q608 327 615 331L659 356Q665 360 667 370V618L488 723L480 560V400Z" fill="#312f2e" />
    <path d="M570 351L602 331Q608 327 615 331L659 356L658 362L570 412Z" fill="#3a3937" />
    <path d="M570 412L658 362L663 370L570 423Z" fill="#343331" />
    <path d="M659 356Q666 361 668 370L663 370L658 362Z" fill="#555350" />
    <path
      d="M570 351L602 331Q608 327 615 331L659 356Q665 360 667 370V618L488 723M570 412L658 362L663 370M570 423L663 370L667 370M659 356L658 362"
      stroke="#0c0c0c"
      strokeWidth="1.300"
    />
    {/* Cover */}
    <path
      d="M419 560V687Q420 697 427 701L472 725Q478 730 485 726L489 722V677Q490 669 496 665Q505 661 505 653V560Z"
      fill="#ac2a64"
    />
    <path d="M475 560V724H489V677Q490 669 496 665Q505 661 505 653V560Z" fill="#bb2f6f" />
    <path
      d="M419 560V687Q420 697 427 701L472 725Q478 730 485 726L489 722V677Q490 669 496 665Q505 661 505 653V560M475.500 560V724M477.500 560V722M482.500 560V722M474 722.500H486"
      stroke="#1b0a12"
    />
    <path d="M493 560H501V607L494 612Z" fill="#0a0a0a" />
  </svg>
);

const ViewCube = () => (
  <svg viewBox="570 399 336 321" className="absolute right-0 top-4 w-[112px] font-['Open_Sans',sans-serif]" aria-label="View cube">
    <defs>
      <filter id="soft">
        <feGaussianBlur stdDeviation="12" />
      </filter>
    </defs>
    <path d="M630 610L726 690L826 610L726 640Z" fill="#999" filter="url(#soft)" />
    <path d="M619 481L726 433L831 481L726 540Z" fill="#f6f6f6" />
    <path d="M619 481L726 540V668L632 598Z" fill="#ededed" />
    <path d="M831 481L726 540V668L820 598Z" fill="#e3e3e3" />
    <path
      d="M619 481L726 433L831 481L726 540ZM619 481L632 598M831 481L820 598"
      fill="none"
      stroke="#777"
      strokeWidth="3"
      strokeDasharray="5 2"
    />
    <path d="M726 668L615 590" stroke="#86e08e" strokeWidth="5" />
    <path d="M726 668L835 590" stroke="#e26868" strokeWidth="5" />
    <path d="M726 668V520" stroke="#3a3ac2" strokeWidth="4" />
    <g fill="#888" textAnchor="middle" fontSize="28" fontWeight="600">
      <text x="672" y="582" transform="rotate(22 672 572)" fontSize="26">LEFT</text>
      <text x="777" y="582" transform="rotate(-26 777 572)" fontSize="26">FRONT</text>
      <text x="722" y="487" transform="rotate(-30 722 480)" fontSize="22">TOP</text>
    </g>
    <g textAnchor="middle" fontSize="42">
      <text x="604" y="595" fill="#8fec96">Y</text>
      <text x="845" y="595" fill="#f08080">X</text>
      <text x="725" y="512" fill="#7070e8">Z</text>
    </g>
  </svg>
);

// ---- Browser tree ----

const Arrow = ({ open }) => (
  <svg viewBox="0 0 12 14" className="h-[14px] w-3 shrink-0" aria-hidden="true">
    {open ? (
      <path d="M0 12H11V1Z" fill="#999" stroke="#222" />
    ) : (
      <path d="M2 1L4 1L10 7L4 13H2Z" fill="#fff" stroke="#222" strokeWidth="1.200" />
    )}
  </svg>
);

const TreeRow = ({ indent, open, leaf, children }) => (
  <li className={`flex h-6 items-center ${indent}`}>
    {!leaf && (
      <button aria-label="Toggle" className="mr-[7px]">
        <Arrow open={open} />
      </button>
    )}
    <div className="flex h-5 items-center whitespace-nowrap bg-[#f2f2f2]">{children}</div>
  </li>
);

const Folder = () => <MdFolder className="size-[18px] shrink-0 text-[#999]" />;

const BrowserPanel = () => (
  <section className="relative w-[300px] text-[11px] text-[#333]">
    <header className="flex h-[25px] items-center border border-[#cacaca] bg-[#f1f1f1] pl-1 pr-[11px] text-[#555]">
      <svg viewBox="0 0 12 8" className="h-2 w-3" fill="#333">
        <path d="M6 1V7L1 4ZM11 1V7L6 4Z" />
      </svg>
      <h2 className="ml-2 flex-1 text-[10px]">BROWSER</h2>
      <button aria-label="Collapse browser">
        <svg viewBox="0 0 10 10" className="size-[10px]">
          <circle cx="5" cy="5" r="5" fill="#222" />
          <path d="M2 5H8" stroke="#fff" />
        </svg>
      </button>
    </header>
    <ul className="mt-[3px]">
      <TreeRow indent="pl-[17px]" open>
        <span className="px-[3px]">
          <Icon name="eye" />
        </span>
        <span className="ml-[3px] flex h-4 items-center bg-[#8f8f8f] pl-[3px] pr-3 font-bold text-white">
          <Icon name="assembly" className="mr-[14px] size-4" />
          Filament Case v43
        </span>
        <svg viewBox="0 0 14 14" className="ml-1 mr-[7px] size-[14px]">
          <circle cx="7" cy="7" r="6" fill="#fff" stroke="#333" />
          <circle cx="7" cy="7" r="2" fill="#222" />
        </svg>
      </TreeRow>
      <TreeRow indent="pl-[35px]">
        <MdSettings className="ml-px mr-[11px] size-4 text-[#888]" />
        <span className="pr-2">Document Settings</span>
      </TreeRow>
      <TreeRow indent="pl-[35px]" open>
        <span className="mr-3 pl-0.5">
          <Folder />
        </span>
        <span className="pr-[10px]">Named Views</span>
      </TreeRow>
      {VIEWS.map((view) => (
        <TreeRow key={view} indent="pl-[73px]" leaf>
          <Icon name="namedView" className="ml-0.5 mr-[14px] size-4" />
          <span className="pr-2">{view}</span>
        </TreeRow>
      ))}
      <TreeRow indent="pl-[35px]">
        <span className="mr-3 pl-0.5">
          <Folder />
        </span>
        <span className="pr-[10px]">Selection Sets</span>
      </TreeRow>
      {["Origin", "Analysis"].map((name) => (
        <TreeRow key={name} indent="pl-[35px]">
          <Icon name="eyeOff" className="ml-[3px] mr-2 size-4" />
          <Folder />
          <span className="pl-[13px] pr-[10px]">{name}</span>
        </TreeRow>
      ))}
      {["Case:1", "Cover:1"].map((name) => (
        <TreeRow key={name} indent="pl-[35px]">
          <Icon name="eye" className="ml-[3px] mr-[9px] size-4" />
          <Icon name="box" className="size-4" />
          <span className="pl-[14px] pr-2">{name}</span>
        </TreeRow>
      ))}
    </ul>
  </section>
);

const CommentsPanel = () => (
  <section className="relative mt-auto flex h-[25px] w-[300px] items-center border border-[#cacaca] bg-[#f1f1f1] pl-6 pr-[11px] text-[10px] text-[#555]">
    <h2 className="flex-1">COMMENTS</h2>
    <button aria-label="Expand comments">
      <svg viewBox="0 0 10 10" className="size-[10px]">
        <circle cx="5" cy="5" r="5" fill="#222" />
        <path d="M2 5H8M5 2V8" stroke="#fff" />
      </svg>
    </button>
  </section>
);

const NavBar = () => (
  <div className="absolute bottom-1.5 left-1/2 flex h-5 -translate-x-1/2 items-center gap-[9px] bg-[#efefef] pl-2 pr-1 text-[#333]">
    {[
      { name: "Orbit", caret: true, d: "M8 1V15M1 10H15M1 10L4 7M1 10L4 13M8 5Q14 5 14 10" },
      { name: "Look at", d: "M1 1H15V14H1ZM4 4H12V11H4ZM4 8H12" },
      { name: "Pan", d: "M5 15L1 9L4 9V3L7 8V1L10 8L13 4V11L11 15Z" },
      { name: "Zoom", d: "M2 6A4 4 0 1 1 10 6A4 4 0 1 1 2 6M9 9L15 14" },
      { name: "Fit", caret: true, d: "M4 6A4 4 0 1 1 12 6A4 4 0 1 1 4 6M11 9L16 14M0 15H3M5 15H8M10 15H13" },
      { name: "Display", caret: true, d: "M1 2H15V11H1ZM6 12V15H10V12M4 15H12", fill: "#8fb8e8" },
      { name: "Grid", caret: true, d: "M1 1H15V15H1ZM4 1V15M8 1V15M12 1V15M1 5H15M1 8H15M1 12H15" },
      { name: "Viewports", caret: true, d: "M1 2H7V13H1ZM9 2H15V13H9ZM1 8H7M9 8H15", fill: "#8fb8e8" },
    ].map((tool) => (
      <button key={tool.name} aria-label={tool.name} className="flex items-center gap-0.5">
        <svg viewBox="0 0 16 16" className="size-4" fill={tool.fill || "none"} stroke="currentColor">
          <path d={tool.d} />
        </svg>
        {tool.caret && <Caret className="size-[5px]" />}
      </button>
    ))}
  </div>
);

// ---- Parameters dialog ----

const GroupRow = ({ open, icon, label }) => (
  <tr className="h-[25px] text-[15px] text-black">
    <td colSpan={5} className="p-0">
      <div className="flex h-[25px] items-center">
        <button aria-label={`Toggle ${label}`} className="flex h-full w-5 items-center justify-center">
          {open ? <ChevronDown className="size-3" strokeWidth={3} /> : <ChevronRight className="size-3 text-[#777]" />}
        </button>
        <div className="flex h-full flex-1 items-center bg-[#eeeeee] pl-[3px]">
          <span className="mr-[5px] flex w-[17px] justify-center">{icon}</span>
          {label}
        </div>
      </div>
    </td>
  </tr>
);

class ParametersDialog extends Component {
  constructor(props) {
    super(props);
    this.state = { filter: "", autoUpdate: true, selected: "board_depth" };
  }

  handleFilterChange = (e) => {
    this.setState({ filter: e.target.value });
  };

  handleAutoUpdateChange = (e) => {
    this.setState({ autoUpdate: e.target.checked });
  };

  render() {
    const { filter, autoUpdate, selected } = this.state;
    const rows = PARAMETERS.filter((p) => p.name.toLowerCase().includes(filter.toLowerCase()));

    return (
      <section
        role="dialog"
        aria-label="Parameters"
        className="absolute right-[31px] top-[171px] w-[595px] rounded-lg border border-[#b5b5b5] bg-[#f1f1f1] font-['Noto_Sans',sans-serif] text-xs text-[#222] shadow-[0_12px_30px_4px_rgba(0,0,0,0.25)]"
      >
        <header className="flex h-[29px] items-center justify-between pl-2 pr-[7px] text-[#888]">
          <h2>PARAMETERS</h2>
          <button aria-label="Close">
            <X className="size-4" strokeWidth={1} />
          </button>
        </header>
        <div className="px-[23px] pb-[10px] pt-[23px]">
          <div className="flex h-6 items-center">
            <button aria-label="All parameters" className="flex h-6 w-6 items-center justify-center bg-[#cfe3f4]">
              <Fx className="text-lg" />
            </button>
            <span className="ml-[11px] h-[23px] w-px bg-[#b5b5b5]" />
            <button aria-label="User parameters" className="ml-[15px] flex w-[18px] items-end">
              <Fx className="text-base" />
              <MdPerson className="-mb-1 -ml-1 size-[11px] shrink-0 text-[#2b86d6]" />
            </button>
            <button aria-label="Favorites" className="ml-[10px] text-[#555]">
              <MdStar className="size-5" />
            </button>
            <input
              type="text"
              aria-label="Filter"
              placeholder="Filter all parameters"
              value={filter}
              onChange={this.handleFilterChange}
              className="ml-[35px] h-[22px] w-[142px] border border-[#999] bg-white px-[3px] text-[13px] placeholder:text-[#909090]"
            />
            <button aria-label="Add" className="ml-9 text-[#777]">
              <Plus className="size-4" strokeWidth={3} />
            </button>
            <button aria-label="Copy" className="ml-[13px] text-[#777]">
              <svg viewBox="0 0 16 16" className="size-4" fill="currentColor">
                <path d="M0 0H6V4H5V11H0ZM7 0L9 3H7ZM6 5H11V9H15V16H6ZM12 5L15 8H12Z" />
              </svg>
            </button>
            <button aria-label="Delete" className="ml-[14px] text-[#a8a8a8]">
              <svg viewBox="0 0 14 16" className="h-4 w-[14px]" fill="currentColor">
                <path d="M2 5H12V16H2ZM1 2H5V0H9V2H13V4H1Z" />
              </svg>
            </button>
            <label className="ml-auto flex items-center gap-0.5 whitespace-nowrap pr-[5px] text-black">
              <input
                type="checkbox"
                checked={autoUpdate}
                onChange={this.handleAutoUpdateChange}
                className="size-[13px] accent-[#0460b5]"
              />
              Automatic Update
            </label>
          </div>

          <div className="mt-[18px] flex h-[330px] flex-col border border-[#8c8c8c] bg-[#f4f4f4]">
            <table className="w-full table-fixed border-collapse text-left">
              <colgroup>
                <col className="w-[120px]" />
                <col className="w-[120px]" />
                <col className="w-[70px]" />
                <col className="w-[120px]" />
                <col />
              </colgroup>
              <thead>
                <tr className="h-[29px] bg-white text-[15px]">
                  <th className="relative bg-[#d9eafb] p-0 pl-1 font-normal">
                    <ChevronDown className="absolute left-1/2 top-0 -mt-0.5 size-[10px] -translate-x-1/2 text-[#777]" />
                    Parameter
                  </th>
                  <th className="border-r border-[#e2e2e2] p-0 pl-1 font-normal">Name</th>
                  <th className="border-r border-[#e2e2e2] p-0 pl-1 font-normal">Unit</th>
                  <th className="border-r border-[#e2e2e2] p-0 pl-1 font-normal">Expression</th>
                  <th className="p-0 pl-1 font-normal">Value</th>
                </tr>
              </thead>
              <tbody>
                <GroupRow open label="Favorites" icon={<MdStar className="size-[19px] shrink-0 text-[#0e93d6]" />} />
                {rows.map((p, i) => {
                  const color = p.name === selected ? "bg-[#d5d5d5]" : i % 2 ? "bg-[#f4f4f4]" : "bg-white";
                  return (
                    <tr key={p.name} className="h-[21px]" onClick={() => this.setState({ selected: p.name })}>
                      <td className="p-0 pl-10">
                        <div className={`flex h-[21px] items-center ${color}`}>
                          <MdStar className="mr-[6px] size-[19px] shrink-0 text-[#0e93d6]" />
                          Benutz...
                        </div>
                      </td>
                      <td className={`p-0 pl-[3px] ${color}`}>{p.name}</td>
                      <td className={`p-0 pl-[3px] ${color}`}>{p.unit}</td>
                      <td className={`p-0 pl-[3px] ${color}`}>{p.expression}</td>
                      <td className={`p-0 pl-[3px] ${color}`}>{p.value}</td>
                    </tr>
                  );
                })}
                <GroupRow label="User Par..." icon={<Fx className="text-lg" />} />
                <GroupRow label="Model P..." icon={<Icon name="box" />} />
              </tbody>
            </table>
            <div className="mt-auto h-[17px] border-t border-white px-[17px] pt-[7px]">
              <div className="h-0.5 w-[415px] rounded-full bg-[#858585]" />
            </div>
          </div>

          <div className="mt-[18px] flex justify-end">
            <button className="h-[25px] w-[86px] border border-[#ababab] bg-[#e1e1e1] text-black">OK</button>
          </div>
        </div>
      </section>
    );
  }
}

// ---- Timeline ----

const PLAYBACK = [
  { name: "Start", d: "M2 2H4V14H2ZM14 2V14L5 8Z" },
  { name: "Step back", d: "M10 2V14L1 8ZM12 6H14V11H12Z" },
  { name: "Play", d: "M2 1V15L14 8Z" },
  { name: "Step forward", d: "M6 2V14L15 8ZM2 6H4V11H2Z" },
  { name: "End", d: "M2 2V14L11 8ZM12 2H14V14H12Z" },
];

const Timeline = () => (
  <footer className="relative z-10 flex h-[42px] items-stretch border-t-2 border-[#dcdcdc] bg-[#f1f1f1] pl-[7px]">
    <div className="flex items-center gap-[9px] pt-1 text-[#555]">
      {PLAYBACK.map((b) => (
        <button key={b.name} aria-label={b.name}>
          <svg viewBox="0 0 16 16" className="size-4" fill="currentColor">
            <path d={b.d} />
          </svg>
        </button>
      ))}
    </div>
    <ol className="ml-[17px] flex pt-[10px]">
      {TIMELINE.map((name, i) => (
        <li key={i} className="flex w-6 flex-col items-center">
          <button
            aria-label={name}
            className={`flex h-6 w-6 items-center justify-center ${i === 22 ? "bg-[#d6d6d6]" : ""}`}
          >
            <Icon name={name} />
          </button>
          <span className="h-1 w-0.5 bg-[#c8c8c8]" />
          <span
            className={`h-0.5 bg-[#c8c8c8] ${i === 0 ? "w-3 self-end" : i === TIMELINE.length - 1 ? "w-3 self-start" : "w-full"}`}
          />
        </li>
      ))}
    </ol>
    <svg viewBox="0 0 12 32" className="-ml-1 mt-2 h-8 w-3" fill="#606060">
      <path d="M0 0H12V6L7 11V32H5V11L0 6Z" />
    </svg>
    <button aria-label="Timeline settings" className="ml-auto mr-[10px] text-[#666]">
      <MdSettings className="mt-1 size-[18px]" />
    </button>
  </footer>
);

export default class App extends Component {
  constructor(props) {
    super(props);
    this.state = { activeTab: "SOLID" };
  }

  handleTab = (activeTab) => {
    this.setState({ activeTab });
  };

  render() {
    return (
      <div className="flex h-screen flex-col overflow-hidden bg-white font-['Liberation_Sans',Arial,sans-serif]">
        <header className="relative z-20">
          <TitleBar />
          <Ribbon activeTab={this.state.activeTab} onTab={this.handleTab} />
        </header>
        <main className="relative flex flex-1 flex-col overflow-hidden pb-1 pl-[3px] pt-1">
          <Canvas />
          <BrowserPanel />
          <CommentsPanel />
          <ViewCube />
          <NavBar />
          <ParametersDialog />
        </main>
        <Timeline />
      </div>
    );
  }
}
